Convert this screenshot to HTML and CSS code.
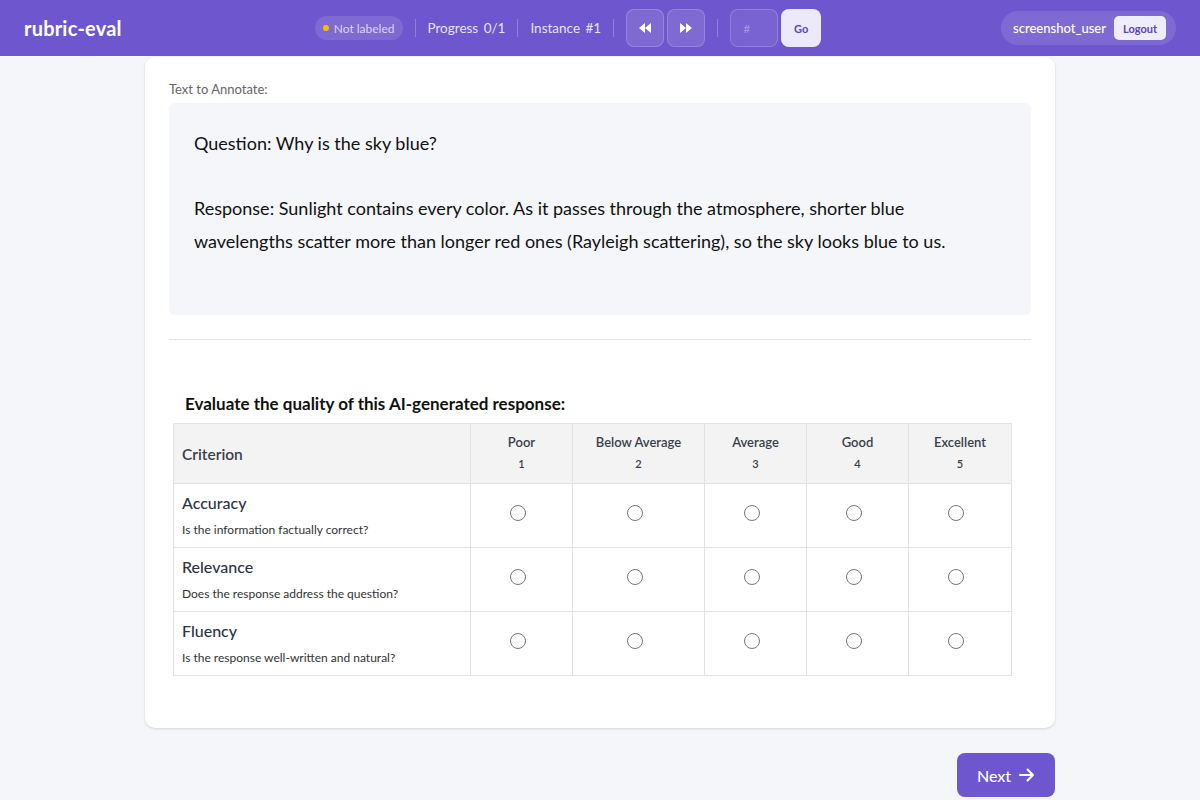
FILE: index.html
```html
<!DOCTYPE html>
<html lang="en">
<head>
<meta charset="utf-8">
<title>rubric-eval</title>
<link rel="stylesheet" href="styles.css">
</head>
<body>
<header class="topbar">
  <div class="brand">rubric-eval</div>
  <div class="center">
    <span class="badge"><span class="dot"></span>Not labeled</span>
    <span class="sep"></span>
    <span class="stat">Progress <b>0/1</b></span>
    <span class="sep"></span>
    <span class="stat">Instance <b>#1</b></span>
    <span class="sep"></span>
    <div class="navbtns">
      <button class="navbtn" aria-label="Previous">
        <svg width="12" height="10" viewBox="0 0 12 10"><path d="M6 0 L0 5 L6 10 Z M12 0 L6 5 L12 10 Z" fill="#fff"/></svg>
      </button>
      <button class="navbtn" aria-label="Next">
        <svg width="12" height="10" viewBox="0 0 12 10"><path d="M0 0 L6 5 L0 10 Z M6 0 L12 5 L6 10 Z" fill="#fff"/></svg>
      </button>
    </div>
    <span class="sep"></span>
    <div class="jump">
      <input class="jumpinput" type="text" placeholder="#">
      <button class="gobtn">Go</button>
    </div>
  </div>
  <div class="user">
    <span class="username">screenshot_user</span>
    <button class="logout">Logout</button>
  </div>
</header>

<main class="main">
  <section class="card">
    <div class="label">Text to Annotate:</div>
    <div class="textbox">
      <p>Question: Why is the sky blue?</p>
      <p class="gap">Response: Sunlight contains every color. As it passes through the atmosphere, shorter blue<br>wavelengths scatter more than longer red ones (Rayleigh scattering), so the sky looks blue to us.</p>
    </div>
    <hr class="divider">
    <div class="rubric">
      <h2 class="rubric-title">Evaluate the quality of this AI-generated response:</h2>
      <table class="grid">
        <colgroup>
          <col class="c-crit"><col class="c-1"><col class="c-2"><col class="c-3"><col class="c-4"><col class="c-5">
        </colgroup>
        <thead>
          <tr>
            <th class="crit-head">Criterion</th>
            <th><div class="lvl">Poor</div><div class="num">1</div></th>
            <th><div class="lvl">Below Average</div><div class="num">2</div></th>
            <th><div class="lvl">Average</div><div class="num">3</div></th>
            <th><div class="lvl">Good</div><div class="num">4</div></th>
            <th><div class="lvl">Excellent</div><div class="num">5</div></th>
          </tr>
        </thead>
        <tbody>
          <tr>
            <td class="crit"><div class="cname">Accuracy</div><div class="cdesc">Is the information factually correct?</div></td>
            <td><span class="radio"></span></td><td><span class="radio"></span></td><td><span class="radio"></span></td><td><span class="radio"></span></td><td><span class="radio"></span></td>
          </tr>
          <tr>
            <td class="crit"><div class="cname">Relevance</div><div class="cdesc">Does the response address the question?</div></td>
            <td><span class="radio"></span></td><td><span class="radio"></span></td><td><span class="radio"></span></td><td><span class="radio"></span></td><td><span class="radio"></span></td>
          </tr>
          <tr>
            <td class="crit"><div class="cname">Fluency</div><div class="cdesc">Is the response well-written and natural?</div></td>
            <td><span class="radio"></span></td><td><span class="radio"></span></td><td><span class="radio"></span></td><td><span class="radio"></span></td><td><span class="radio"></span></td>
          </tr>
        </tbody>
      </table>
    </div>
  </section>
  <div class="actions">
    <button class="nextbtn">Next
      <svg width="16" height="14" viewBox="0 0 16 14"><path d="M1 7 H14 M8.5 1.5 L14 7 L8.5 12.5" fill="none" stroke="#fff" stroke-width="2" stroke-linecap="round" stroke-linejoin="round"/></svg>
    </button>
  </div>
</main>
</body>
</html>
```

FILE: styles.css
```css
* { box-sizing: border-box; }
html, body { margin: 0; padding: 0; }
body {
  background: #f5f6fa;
  font-family: "Lato", "Noto Sans", sans-serif;
  color: #1b1b1f;
  height: 800px;
  overflow: hidden;
}
button, input { font-family: inherit; }

.topbar {
  height: 56px;
  background: #6e56cf;
  display: flex;
  align-items: center;
  padding: 0 24px;
}
.brand {
  color: #fff;
  font-weight: 700;
  font-size: 20px;
  letter-spacing: 0.2px;
}
.center {
  display: flex;
  align-items: center;
  gap: 12px;
  margin-left: 193px;
}
.badge {
  display: inline-flex;
  align-items: center;
  gap: 5px;
  height: 24px;
  padding: 0 8px;
  border-radius: 12px;
  background: rgba(255,255,255,0.12);
  color: rgba(255,255,255,0.72);
  font-size: 12px;
}
.dot { width: 6px; height: 6px; border-radius: 50%; background: #fbbc05; }
.sep { width: 1px; height: 18px; background: rgba(255,255,255,0.25); }
.stat { color: rgba(255,255,255,0.85); font-size: 13.5px; }
.stat b { font-weight: 400; margin-left: 2px; }
.navbtns { display: flex; gap: 3px; }
.navbtn {
  width: 38px; height: 38px;
  border-radius: 8px;
  border: 1px solid rgba(255,255,255,0.18);
  background: rgba(255,255,255,0.12);
  display: flex; align-items: center; justify-content: center;
  padding: 0;
}
.jump { display: flex; gap: 3px; }
.jumpinput {
  width: 48px; height: 38px;
  border-radius: 8px;
  border: 1px solid rgba(255,255,255,0.18);
  background: rgba(255,255,255,0.08);
  color: #fff;
  font-size: 12px;
  padding: 0 12px;
  outline: none;
}
.jumpinput::placeholder { color: rgba(255,255,255,0.35); }
.gobtn {
  width: 40px; height: 38px;
  border-radius: 8px;
  border: none;
  background: #ece9fb;
  color: #5b45b8;
  font-weight: 700;
  font-size: 11px;
}
.user {
  margin-left: auto;
  display: flex;
  align-items: center;
  gap: 8px;
  height: 34px;
  padding: 0 10px 0 12px;
  border-radius: 17px;
  background: rgba(255,255,255,0.12);
}
.username { color: #fff; font-size: 13px; font-weight: 500; }
.logout {
  height: 24px;
  padding: 0 9px;
  border: none;
  border-radius: 5px;
  background: #efecfb;
  color: #5b45b8;
  font-size: 11px;
  font-weight: 700;
}

.main {
  width: 910px;
  margin: 0 auto;
  padding-top: 1px;
}
.card {
  background: #fff;
  border-radius: 10px;
  box-shadow: 0 1px 3px rgba(0,0,0,0.10), 0 1px 2px rgba(0,0,0,0.04);
  padding: 24px 24px 52px;
}
.label {
  font-size: 13px;
  color: #666;
  line-height: 16px;
  margin-bottom: 6px;
}
.textbox {
  background: #f5f6fa;
  border-radius: 6px;
  padding: 24px 25px 57px;
  font-size: 18px;
  line-height: 33px;
  color: #111;
}
.textbox p { margin: 0; }
.textbox .gap { margin-top: 32px; }
.divider {
  border: none;
  border-top: 1px solid #e2e2e6;
  margin: 24px 0 0;
}
.rubric { padding: 54px 4px 0; }
.rubric-title {
  margin: 0 0 9px 12px;
  font-size: 17px;
  font-weight: 700;
  line-height: 20px;
  color: #111;
}
.grid {
  border-collapse: collapse;
  table-layout: fixed;
  width: 838px;
}
.c-crit { width: 297px; }
.c-1 { width: 102px; }
.c-2 { width: 132px; }
.c-3 { width: 102px; }
.c-4 { width: 102px; }
.c-5 { width: 103px; }
.grid th, .grid td {
  border: 1px solid #e2e2e2;
  text-align: center;
  vertical-align: middle;
}
.grid thead th {
  background: #f3f3f3;
  height: 60px;
  color: #3a3f4b;
  font-weight: 600;
}
.grid th.crit-head {
  text-align: left;
  padding-left: 8px;
  font-size: 15.5px;
}
.lvl { font-size: 13px; line-height: 16px; }
.num { font-size: 11px; line-height: 14px; margin-top: 7px; padding-bottom: 2px; }
.grid tbody td { height: 64px; }
.grid td.crit {
  text-align: left;
  padding: 0 8px;
}
.cname { font-size: 16px; color: #2f3441; font-weight: 500; line-height: 18px; }
.cdesc { font-size: 12px; color: #333; line-height: 14px; margin-top: 11px; }
.radio {
  display: inline-block;
  width: 16px; height: 16px;
  border-radius: 50%;
  border: 1px solid #777;
  background: #fff;
  vertical-align: middle;
  margin: 0 8px 6px 0;
}
.actions {
  display: flex;
  justify-content: flex-end;
  margin-top: 25px;
}
.nextbtn {
  height: 44px;
  width: 98px;
  border: none;
  border-radius: 8px;
  background: #6e56cf;
  color: #fff;
  font-size: 16px;
  font-weight: 500;
  display: flex;
  align-items: center;
  justify-content: center;
  gap: 8px;
}
```
